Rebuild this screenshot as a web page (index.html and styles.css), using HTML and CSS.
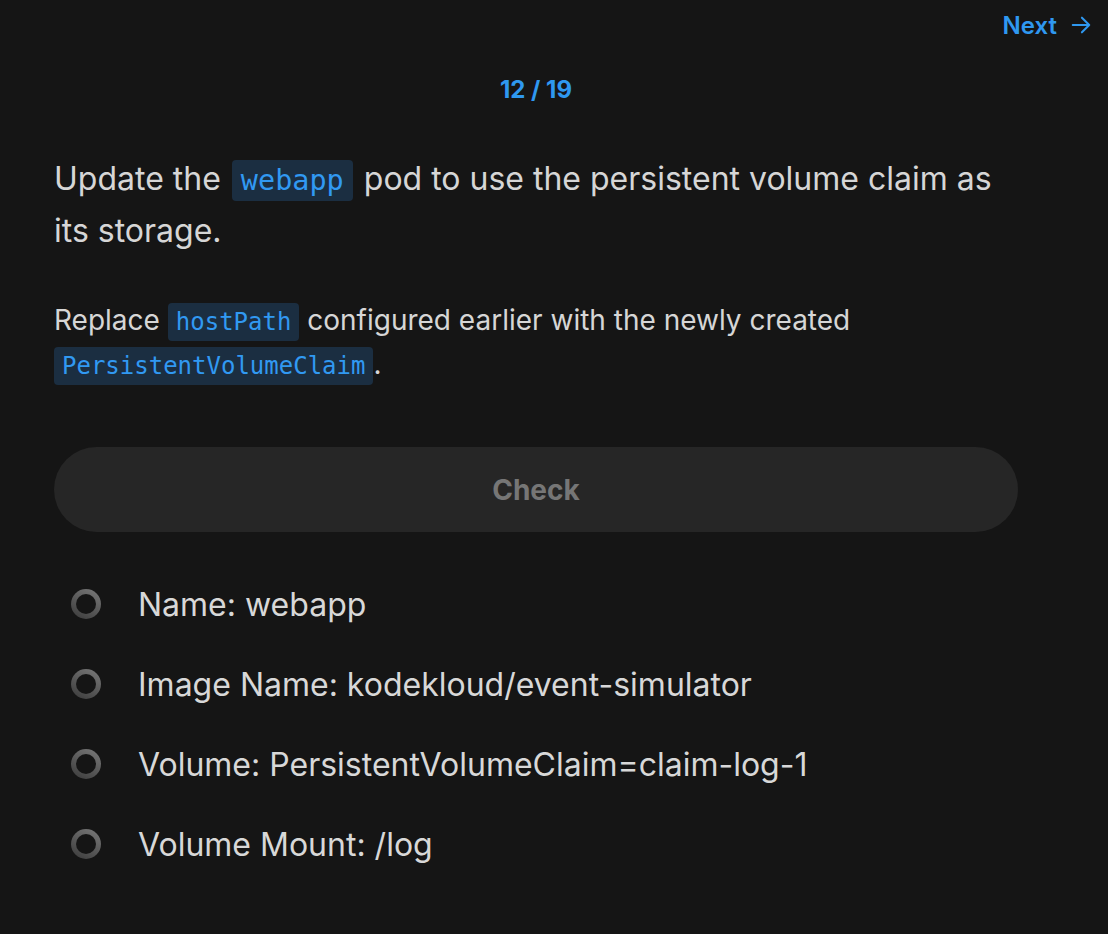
FILE: index.html
```html
<!DOCTYPE html>
<html>
<head>
<meta charset="utf-8">
<link rel="stylesheet" href="styles.css">
</head>
<body>
<div class="topbar">
  <a class="next">Next
    <svg width="22" height="22" viewBox="0 0 24 24" fill="none" stroke="currentColor" stroke-width="2.2" stroke-linecap="round" stroke-linejoin="round"><path d="M3 12h18M13 4l8 8-8 8"/></svg>
  </a>
</div>
<main class="content">
  <div class="counter">12 / 19</div>
  <p class="lead">Update the <code>webapp</code> pod to use the persistent volume claim as its storage.</p>
  <p class="sub">Replace <code>hostPath</code> configured earlier with the newly created <code>PersistentVolumeClaim</code>.</p>
  <button class="check">Check</button>
  <ul class="checks">
    <li><span class="dot"></span>Name: webapp</li>
    <li><span class="dot"></span>Image Name: kodekloud/event-simulator</li>
    <li><span class="dot"></span>Volume: PersistentVolumeClaim=claim-log-1</li>
    <li><span class="dot"></span>Volume Mount: /log</li>
  </ul>
</main>
</body>
</html>
```
FILE: styles.css
```css
html, body {
  margin: 0;
  padding: 0;
  background: #151515;
  height: 100%;
}
body {
  font-family: Inter, "Noto Sans", sans-serif;
  color: #d6d6d6;
}
.topbar {
  display: flex;
  justify-content: flex-end;
  padding: 10px 16px 0 0;
  height: 30px;
}
.next {
  display: flex;
  align-items: center;
  gap: 13px;
  color: #2f98f0;
  font-weight: 600;
  font-size: 24px;
}
.content {
  width: 964px;
  margin-left: 54px;
}
.counter {
  text-align: center;
  color: #2f98f0;
  font-weight: 700;
  font-size: 24px;
  margin-top: 35px;
}
.lead {
  font-size: 32px;
  line-height: 50px;
  margin: 50px 0 0 0;
}
.sub {
  font-size: 28px;
  line-height: 42px;
  margin: 43px 0 0 0;
}
code {
  font-family: "DejaVu Sans Mono", monospace;
  background: #1b2e41;
  color: #3199f2;
  border-radius: 4px;
  padding: 5px 8px;
}
.lead code { font-size: 28.5px; padding: 4px 9px; margin: 0 2px; }
.sub code { font-size: 24px; }
.check {
  display: block;
  width: 964px;
  height: 85px;
  margin-top: 60px;
  border: none;
  border-radius: 43px;
  background: #262626;
  color: #767676;
  font-family: Inter, sans-serif;
  font-weight: 700;
  font-size: 28px;
}
.checks {
  list-style: none;
  margin: 32px 0 0 0;
  padding: 0;
}
.checks li {
  display: flex;
  align-items: center;
  height: 80px;
  font-size: 32px;
  color: #d8d8d8;
}
.dot {
  width: 20px;
  height: 20px;
  border-radius: 50%;
  border: 5px solid transparent;
  background: linear-gradient(#151515, #151515) padding-box, linear-gradient(30deg, #3a3a3a, #7a7a7a) border-box;
  margin: 0 37px 0 17px;
  flex: none;
}
```
